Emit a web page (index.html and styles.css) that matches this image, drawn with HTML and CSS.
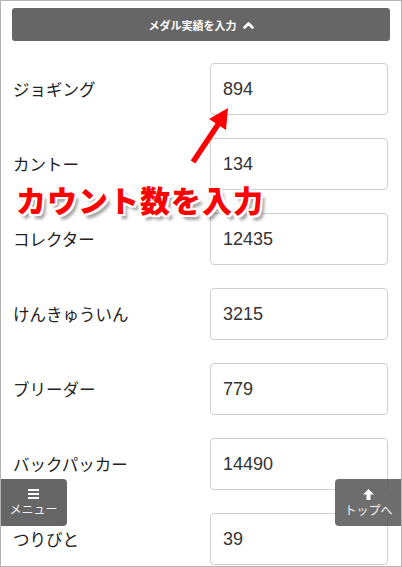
FILE: index.html
```html
<!DOCTYPE html>
<html lang="ja">
<head>
<meta charset="utf-8">
<link rel="stylesheet" href="styles.css">
</head>
<body>
<div class="frame">
  <div class="toggle">
    <span>メダル実績を入力</span>
    <svg class="chev" width="11" height="8" viewBox="0 0 11 8"><polyline points="1.5,6.5 5.5,2.5 9.5,6.5" fill="none" stroke="#fff" stroke-width="2.6" stroke-linecap="round" stroke-linejoin="round"/></svg>
  </div>
  <div class="form">
    <div class="row"><span class="label">ジョギング</span><div class="field">894</div></div>
    <div class="row"><span class="label">カントー</span><div class="field">134</div></div>
    <div class="row"><span class="label">コレクター</span><div class="field">12435</div></div>
    <div class="row"><span class="label">けんきゅういん</span><div class="field">3215</div></div>
    <div class="row"><span class="label">ブリーダー</span><div class="field">779</div></div>
    <div class="row"><span class="label">バックパッカー</span><div class="field">14490</div></div>
    <div class="row"><span class="label">つりびと</span><div class="field">39</div></div>
  </div>

  <svg class="arrow" width="402" height="567" viewBox="0 0 402 567">
    <line x1="193" y1="162" x2="219" y2="123" stroke="#ff0000" stroke-width="5.5" stroke-linecap="butt"/>
    <polygon points="228,108 226,130 209,119" fill="#ff0000"/>
  </svg>
  <div class="note">カウント数を入力</div>

  <div class="fab fab-menu">
    <svg width="11" height="10" viewBox="0 0 11 10"><rect x="0" y="0" width="11" height="2" fill="#fff"/><rect x="0" y="4" width="11" height="2" fill="#fff"/><rect x="0" y="8" width="11" height="2" fill="#fff"/></svg>
    <span>メニュー</span>
  </div>
  <div class="fab fab-top">
    <svg width="11" height="11" viewBox="0 0 11 11"><polygon points="5.5,0 11,5.5 7.5,5.5 7.5,11 3.5,11 3.5,5.5 0,5.5" fill="#fff"/></svg>
    <span>トップへ</span>
  </div>
</div>
</body>
</html>
```

FILE: styles.css
```css
html, body {
  margin: 0;
  padding: 0;
  background: #fff;
}
.frame {
  position: relative;
  width: 402px;
  height: 567px;
  box-sizing: border-box;
  border: 1px solid #b4b4b4;
  padding: 7px 11px 0 11px;
  overflow: hidden;
  font-family: "Noto Sans CJK JP", "Liberation Sans", sans-serif;
  color: #333;
}
.toggle {
  height: 33px;
  background: #666;
  border-radius: 3px;
  display: flex;
  align-items: center;
  justify-content: center;
  gap: 6px;
  color: #fff;
  font-size: 11px;
  font-weight: 700;
}
.chev {
  display: block;
  margin-top: 1px;
}
.form {
  margin-top: 22px;
  display: flex;
  flex-direction: column;
  gap: 23px;
  padding: 0 2px 0 1px;
}
.row {
  display: flex;
  align-items: center;
  justify-content: space-between;
  height: 52px;
}
.label {
  font-size: 16.5px;
  color: #222;
}
.field {
  width: 178px;
  height: 52px;
  box-sizing: border-box;
  border: 1px solid #d0d0d0;
  border-radius: 4px;
  padding-left: 12px;
  display: flex;
  align-items: center;
  font-family: "Liberation Sans", Arial, sans-serif;
  font-size: 18px;
  color: #333;
  background: #fff;
}
.arrow {
  position: absolute;
  left: -1px;
  top: -1px;
  pointer-events: none;
}
.note {
  position: absolute;
  left: 15px;
  top: 182px;
  font-size: 30px;
  line-height: 32px;
  font-weight: 900;
  color: #ff0000;
  letter-spacing: 1px;
  white-space: nowrap;
  text-shadow:
    2px 0 0 #fff, -2px 0 0 #fff, 0 2px 0 #fff, 0 -2px 0 #fff,
    2px 2px 0 #fff, -2px -2px 0 #fff, 2px -2px 0 #fff, -2px 2px 0 #fff,
    4px 5px 3px rgba(0,0,0,0.35);
}
.fab {
  position: absolute;
  top: 478px;
  width: 67px;
  height: 47px;
  background: rgba(85,85,85,0.9);
  color: #f2f2f2;
  display: flex;
  flex-direction: column;
  align-items: center;
  justify-content: center;
  gap: 3px;
  font-size: 12px;
  line-height: 14px;
  white-space: nowrap;
}
.fab-menu {
  left: -1px;
  border-radius: 0 4px 4px 0;
}
.fab-top {
  left: 334px;
  border-radius: 4px 0 0 4px;
  background: rgba(85,85,85,0.85);
}
.fab svg {
  display: block;
}
```
